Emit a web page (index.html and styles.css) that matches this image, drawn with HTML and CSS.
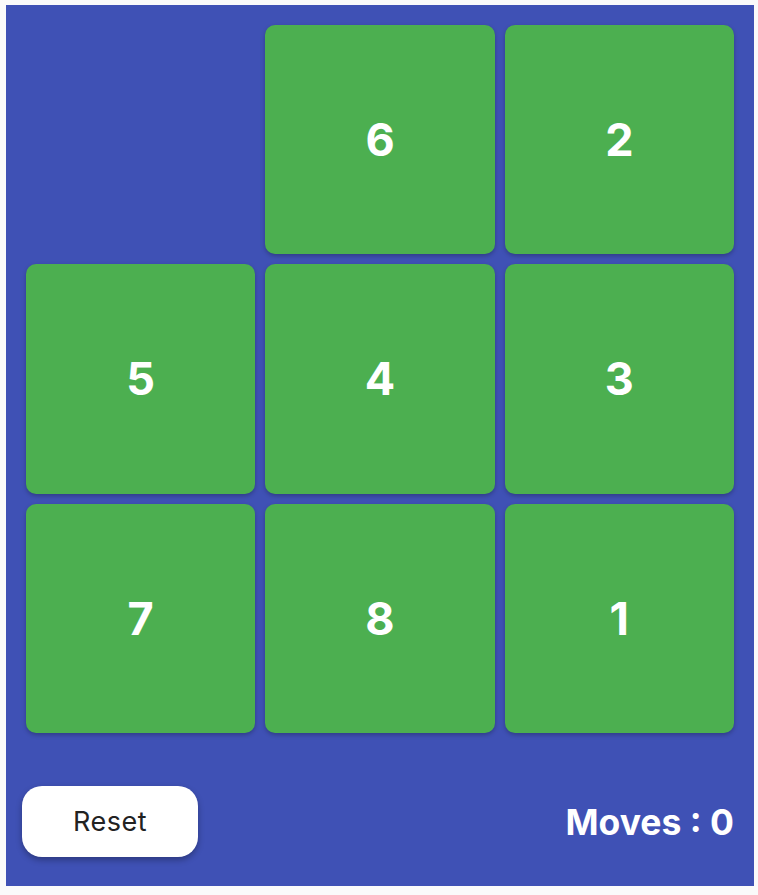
FILE: index.html
```html
<!DOCTYPE html>
<html>
<head>
<meta charset="utf-8">
<link rel="stylesheet" href="styles.css">
</head>
<body>
<div class="board">
  <div class="grid">
    <div class="cell empty"></div>
    <div class="cell tile">6</div>
    <div class="cell tile">2</div>
    <div class="cell tile">5</div>
    <div class="cell tile">4</div>
    <div class="cell tile">3</div>
    <div class="cell tile">7</div>
    <div class="cell tile">8</div>
    <div class="cell tile">1</div>
  </div>
  <div class="footer">
    <button class="reset">Reset</button>
    <div class="moves">Moves : 0</div>
  </div>
</div>
</body>
</html>
```
FILE: styles.css
```css
html, body {
  margin: 0;
  padding: 0;
  background: #fafafa;
}
body {
  padding: 5px 4px 9px 6px;
  font-family: Inter, Roboto, "Liberation Sans", sans-serif;
}
.board {
  width: 748px;
  height: 881px;
  box-sizing: border-box;
  background: #3f51b5;
  padding: 20px 20px 29px 20px;
  display: flex;
  flex-direction: column;
}
.grid {
  display: grid;
  grid-template-columns: repeat(3, 1fr);
  grid-template-rows: repeat(3, 229.33px);
  gap: 10px;
}
.tile {
  background: #4caf50;
  border-radius: 10px;
  color: #fff;
  font-weight: 700;
  font-size: 45px;
  display: flex;
  align-items: center;
  justify-content: center;
  box-shadow: 0 2px 4px rgba(0,0,0,0.25);
}
.footer {
  margin-top: 53px;
  display: flex;
  justify-content: space-between;
  align-items: center;
}
.reset {
  margin-left: -4px;
  width: 176px;
  height: 71px;
  border: none;
  border-radius: 20px;
  background: #fff;
  color: #222;
  font-family: Inter, Roboto, "Liberation Sans", sans-serif;
  font-size: 27px;
  letter-spacing: 0.5px;
  box-shadow: 0 3px 6px rgba(0,0,0,0.3);
  padding: 0;
}
.moves {
  color: #fff;
  font-weight: 700;
  font-size: 35.5px;
  margin-top: 3px;
}
```
